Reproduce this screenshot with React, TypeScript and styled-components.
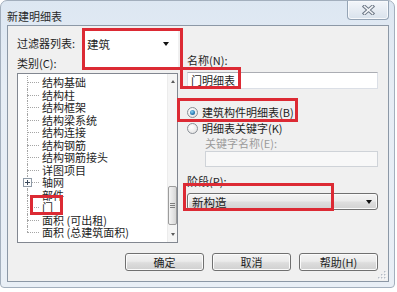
import styled, { createGlobalStyle } from "styled-components";

const GlobalStyle = createGlobalStyle`
  html, body {
    margin: 0;
    padding: 0;
    background: #ffffff;
  }
  body {
    font-family: "Noto Sans CJK SC", "Liberation Sans", sans-serif;
    font-size: 11px;
    color: #1e1e1e;
  }
  * {
    box-sizing: border-box;
  }
`;

const categories = [
  "结构基础",
  "结构柱",
  "结构框架",
  "结构梁系统",
  "结构连接",
  "结构钢筋",
  "结构钢筋接头",
  "详图项目",
  "轴网",
  "部件",
  "门",
  "面积 (可出租)",
  "面积 (总建筑面积)",
];

// red annotation boxes drawn over the dialog
const marks = [
  { x: 81, y: 27, w: 101, h: 42 },
  { x: 179, y: 66, w: 61, h: 22 },
  { x: 176, y: 97, w: 121, h: 24 },
  { x: 29, y: 194, w: 33, h: 20 },
  { x: 182, y: 182, w: 151, h: 28 },
];

const App = () => {
  return (
    <>
      <GlobalStyle />
      <Window>
        <TitleBar>
          <Title>新建明细表</Title>
          <CloseButton>
            <svg width="13" height="10" viewBox="0 0 13 10">
              <path d="M2.5 1.5 L10.5 8.5 M10.5 1.5 L2.5 8.5" stroke="#6f7a88" strokeWidth="3.6" strokeLinecap="square" />
              <path d="M2.5 1.5 L10.5 8.5 M10.5 1.5 L2.5 8.5" stroke="#f4f6f9" strokeWidth="1.6" strokeLinecap="square" />
            </svg>
          </CloseButton>
        </TitleBar>
        <Client>
          <LeftColumn>
            <FilterRow>
              <FilterLabel>过滤器列表:</FilterLabel>
              <FilterCombo>
                <span>建筑</span>
                <Arrow />
              </FilterCombo>
            </FilterRow>
            <CategoryLabel>类别(C):</CategoryLabel>
            <ListBox>
              <TreeBody>
                {categories.map((name, i) => (
                  <TreeItem key={name} $last={i === categories.length - 1}>
                    {name === "轴网" && (
                      <Expander width="9" height="9" viewBox="0 0 9 9">
                        <rect x="0.5" y="0.5" width="8" height="8" fill="#fdfdfd" stroke="#8f9aa6" />
                        <path d="M2 4.5 H7 M4.5 2 V7" stroke="#3b4a5c" />
                      </Expander>
                    )}
                    {name}
                  </TreeItem>
                ))}
              </TreeBody>
              <ScrollBar>
                <ScrollButton>
                  <ArrowUp />
                </ScrollButton>
                <ScrollTrack>
                  <Thumb>
                    <Grip />
                    <Grip />
                    <Grip />
                  </Thumb>
                </ScrollTrack>
                <ScrollButton>
                  <ArrowDown />
                </ScrollButton>
              </ScrollBar>
            </ListBox>
          </LeftColumn>

          <RightColumn>
            <NameLabel>名称(N):</NameLabel>
            <TextField>门明细表</TextField>
            <RadioRow $gap={16}>
              <Radio $checked />
              <span>建筑构件明细表(B)</span>
            </RadioRow>
            <RadioRow $gap={2}>
              <Radio />
              <span>明细表关键字(K)</span>
            </RadioRow>
            <KeyLabel>关键字名称(E):</KeyLabel>
            <DisabledField />
            <PhaseLabel>阶段(P):</PhaseLabel>
            <PhaseCombo>
              <span>新构造</span>
              <Arrow />
            </PhaseCombo>
          </RightColumn>

          <ButtonRow>
            <Button>确定</Button>
            <Button>取消</Button>
            <Button>帮助(H)</Button>
          </ButtonRow>

          <SizeGrip width="10" height="10" viewBox="0 0 10 10">
            {[
              [8, 2],
              [8, 5],
              [5, 5],
              [8, 8],
              [5, 8],
              [2, 8],
            ].map(([cx, cy]) => (
              <g key={`${cx}-${cy}`}>
                <rect x={cx} y={cy} width="1.4" height="1.4" fill="#ffffff" />
                <rect x={cx - 1} y={cy - 1} width="1.4" height="1.4" fill="#b4bcc6" />
              </g>
            ))}
          </SizeGrip>
        </Client>

        {marks.map((m) => (
          <Mark key={`${m.x}-${m.y}`} $x={m.x} $y={m.y} $w={m.w} $h={m.h} />
        ))}
      </Window>
    </>
  );
};

const Window = styled.div`
  position: relative;
  width: 395px;
  height: 288px;
  padding: 0 5px 5px 6px;
  display: flex;
  flex-direction: column;
  background: linear-gradient(180deg, #dde7f2 0%, #e6edf5 30%, #e9eff6 100%);
  border: 1px solid #a3afbd;
  border-radius: 7px 7px 4px 4px;
`;

const TitleBar = styled.div`
  height: 24px;
  display: flex;
  justify-content: space-between;
  align-items: flex-start;
`;

const Title = styled.div`
  padding-top: 8px;
  line-height: 14px;
  color: #2a2a2a;
`;

const CloseButton = styled.div`
  width: 42px;
  height: 19px;
  display: flex;
  align-items: center;
  justify-content: center;
  border: 1px solid #95a4b5;
  border-top: none;
  border-radius: 0 0 4px 4px;
  background: linear-gradient(180deg, #f3f6fa 0%, #e6ecf3 50%, #d9e2ec 100%);
  box-shadow: inset 0 0 0 1px #f7f9fc;
`;

const Client = styled.div`
  position: relative;
  flex: 1;
  display: grid;
  grid-template-columns: 161px 191px;
  column-gap: 9px;
  align-content: start;
  padding: 4px 10px 0 9px;
  background: #f0f0f0;
  border: 1px solid #8c98a6;
`;

const LeftColumn = styled.div`
  display: flex;
  flex-direction: column;
`;

const FilterRow = styled.div`
  height: 27px;
  display: flex;
  align-items: flex-start;
`;

const FilterLabel = styled.div`
  width: 66px;
  line-height: 26px;
`;

const FilterCombo = styled.div`
  width: 97px;
  height: 38px;
  display: flex;
  justify-content: space-between;
  align-items: flex-start;
  padding: 0 9px 0 5px;
  line-height: 28px;
  background: #ffffff;
  span {
    font-size: 11.5px;
  }
  & > div {
    margin-top: 12px;
  }
`;

const Arrow = styled.div`
  width: 0;
  height: 0;
  border-left: 3.5px solid transparent;
  border-right: 3.5px solid transparent;
  border-top: 4px solid #111111;
`;

const CategoryLabel = styled.div`
  line-height: 12px;
  margin-bottom: 4px;
`;

const ListBox = styled.div`
  height: 170px;
  display: flex;
  background: #ffffff;
  border: 1px solid #828790;
`;

const TreeBody = styled.div`
  flex: 1;
  padding: 2px 0 0 9px;
  overflow: hidden;
`;

const TreeItem = styled.div<{ $last?: boolean }>`
  position: relative;
  height: 12.5px;
  line-height: 12.5px;
  padding-left: 15px;
  white-space: nowrap;
  &::before {
    content: "";
    position: absolute;
    left: 0;
    top: 50%;
    width: 12px;
    border-top: 1px dotted #a5a5a5;
  }
  &::after {
    content: "";
    position: absolute;
    left: 0;
    top: 0;
    bottom: ${(p) => (p.$last ? "50%" : "0")};
    border-left: 1px dotted #a5a5a5;
  }
`;

const Expander = styled.svg`
  position: absolute;
  left: -4px;
  top: 2px;
  z-index: 1;
`;

const ScrollBar = styled.div`
  width: 10px;
  display: flex;
  flex-direction: column;
  background: #f5f5f5;
  border-left: 1px solid #ececec;
`;

const ScrollButton = styled.div`
  height: 15px;
  display: flex;
  align-items: center;
  justify-content: center;
`;

const ArrowUp = styled.div`
  width: 0;
  height: 0;
  border-left: 2.5px solid transparent;
  border-right: 2.5px solid transparent;
  border-bottom: 3px solid #5b5b5b;
`;

const ArrowDown = styled(ArrowUp)`
  border-bottom: none;
  border-top: 3px solid #5b5b5b;
`;

const ScrollTrack = styled.div`
  flex: 1;
`;

const Thumb = styled.div`
  margin-top: 97px;
  height: 39px;
  display: flex;
  flex-direction: column;
  justify-content: center;
  align-items: center;
  gap: 1px;
  border: 1px solid #9c9c9c;
  border-radius: 2px;
  background: linear-gradient(90deg, #f4f4f4 0%, #e6e6e6 50%, #d6d6d6 100%);
`;

const Grip = styled.div`
  width: 5px;
  height: 1px;
  background: #7d7d7d;
`;

const RightColumn = styled.div`
  display: flex;
  flex-direction: column;
`;

const NameLabel = styled.div`
  margin-top: 23px;
  line-height: 14px;
`;

const TextField = styled.div`
  margin-top: 5px;
  height: 17px;
  padding-left: 3px;
  line-height: 15px;
  background: #ffffff;
  border: 1px solid #dbdfe6;
  border-top-color: #abadb3;
`;

const RadioRow = styled.div<{ $gap: number }>`
  margin-top: ${(p) => p.$gap}px;
  height: 14px;
  display: flex;
  align-items: center;
  gap: 4px;
  line-height: 14px;
`;

const Radio = styled.div<{ $checked?: boolean }>`
  width: 11px;
  height: 11px;
  border-radius: 50%;
  border: 1px solid #8a8f96;
  background: radial-gradient(circle at 40% 35%, #ffffff 0%, #e8e8e8 70%, #d4d4d4 100%);
  display: flex;
  align-items: center;
  justify-content: center;
  &::after {
    content: "";
    width: 5px;
    height: 5px;
    border-radius: 50%;
    display: ${(p) => (p.$checked ? "block" : "none")};
    background: radial-gradient(circle at 40% 35%, #8fd2f2 0%, #2c7fb8 55%, #1b4f7e 100%);
  }
`;

const KeyLabel = styled.div`
  margin-top: 1px;
  padding-left: 18px;
  line-height: 14px;
  color: #9b9b9b;
`;

const DisabledField = styled.div`
  margin: 1px 0 0 18px;
  height: 16px;
  background: #f8f8f8;
  border: 1px solid #cfd3d8;
`;

const PhaseLabel = styled.div`
  margin-top: 7px;
  line-height: 14px;
`;

const PhaseCombo = styled.div`
  margin-top: 5px;
  height: 17px;
  display: flex;
  justify-content: space-between;
  align-items: center;
  padding: 0 5px 0 4px;
  border: 1px solid #707070;
  border-radius: 3px;
  background: linear-gradient(180deg, #f4f4f4 0%, #ebebeb 45%, #dedede 55%, #d2d2d2 100%);
  box-shadow: inset 0 0 0 1px #fafafa;
  span {
    font-size: 11.5px;
  }
`;

const ButtonRow = styled.div`
  grid-column: 1 / -1;
  margin-top: 10px;
  display: flex;
  justify-content: flex-end;
  gap: 8px;
`;

const Button = styled.button`
  width: 79px;
  height: 18px;
  padding: 0;
  font: inherit;
  line-height: 16px;
  color: #1e1e1e;
  border: 1px solid #707070;
  border-radius: 3px;
  background: linear-gradient(180deg, #f3f3f3 0%, #ebebeb 45%, #dddddd 55%, #d0d0d0 100%);
  box-shadow: inset 0 0 0 1px #fbfbfb;
`;

const SizeGrip = styled.svg`
  position: absolute;
  right: 1px;
  bottom: 1px;
`;

const Mark = styled.div<{ $x: number; $y: number; $w: number; $h: number }>`
  position: absolute;
  left: ${(p) => p.$x}px;
  top: ${(p) => p.$y}px;
  width: ${(p) => p.$w}px;
  height: ${(p) => p.$h}px;
  border: 3px solid #dc2a34;
  pointer-events: none;
`;

export default App;
